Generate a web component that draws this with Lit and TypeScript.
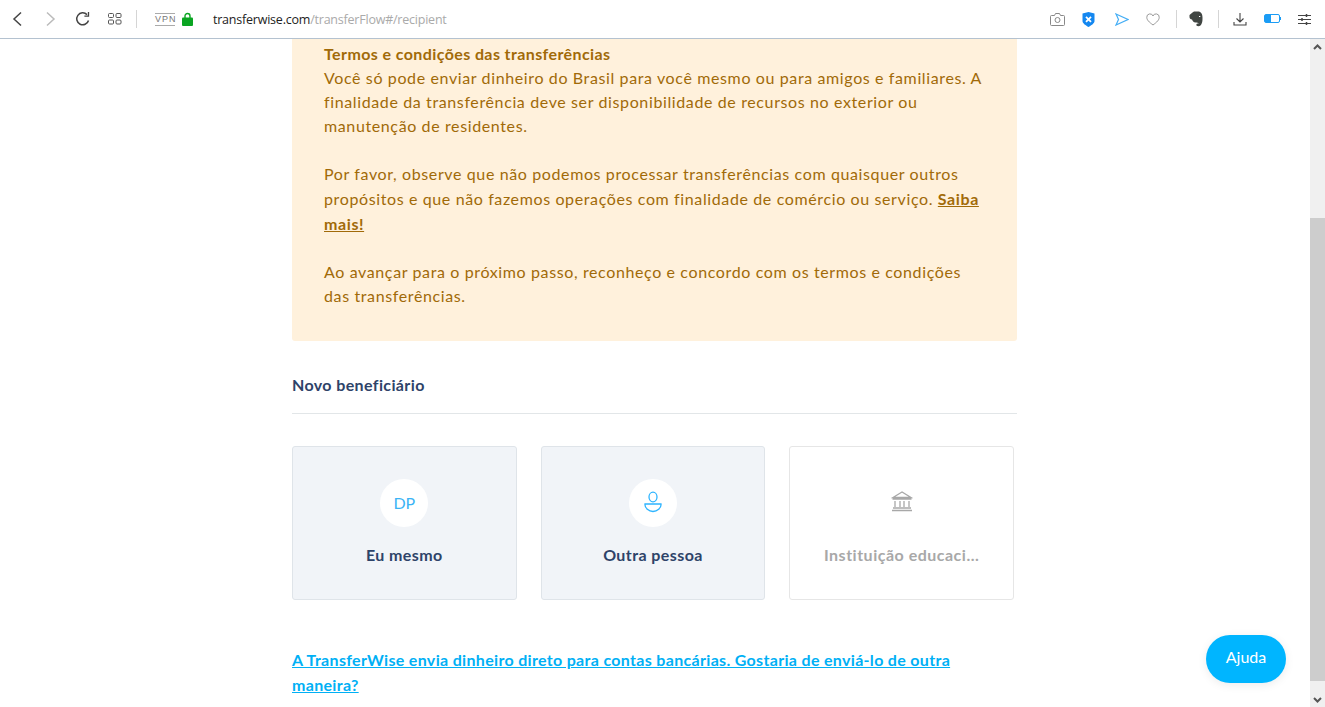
import { LitElement, html, css } from "lit";
import { customElement } from "lit/decorators.js";

@customElement("app-root")
export class AppRoot extends LitElement {
  static styles = css`
    :host { display: block; width: 1325px; height: 707px; overflow: hidden; position: relative; background: #fff; font-family: "Lato", "Liberation Sans", sans-serif; }
    svg { display: block; flex: none; }
    .bar { height: 38px; border-bottom: 1px solid #b4c2d0; display: flex; align-items: center; box-sizing: content-box; background: #fff; }
    .nav { display: flex; align-items: center; padding-left: 11px; gap: 18px; }
    .sep { width: 1px; height: 18px; background: #d5d5d5; flex: none; }
    .vpn { font: 9px "Liberation Sans", sans-serif; letter-spacing: 1px; color: #777; border-top: 1px solid #aaa; border-bottom: 1px solid #aaa; width: 20px; text-align: center; line-height: 9px; padding: 1px 0; margin-left: 18px; }
    .lock { margin-left: 7px; }
    .url { font: 12.5px "Open Sans", sans-serif; color: #222; margin-left: 20px; letter-spacing: -0.22px; }
    .url span { color: #aaa; }
    .tools { margin-left: auto; display: flex; align-items: center; padding-right: 14px; }
    .body { display: flex; height: 668px; }
    .page { flex: 1; display: flex; justify-content: center; overflow: hidden; }
    .col { width: 725px; margin-left: -1px; }
    .alert { background: #fff1dc; color: #a16a08; border-radius: 0 0 3px 3px; padding: 3px 32px 32px; height: 267px; font-size: 16px; line-height: 24px; letter-spacing: 0.62px; }
    .alert strong { font-weight: 700; letter-spacing: 0.4px; }
    .alert a { color: #a16a08; font-weight: 700; text-decoration: underline; letter-spacing: 0.6px; }
    .gap { height: 24px; }
    .line { white-space: nowrap; }
    .line.tall { height: 25px; line-height: 25px; }
    .section { margin-top: 32px; height: 40px; border-bottom: 1px solid #e2e6e8; font-size: 16px; font-weight: 700; color: #2e4369; letter-spacing: 0.38px; line-height: 24px; box-sizing: content-box; }
    .cards { display: grid; grid-template-columns: repeat(3, 224.67px); gap: 24px; margin-top: 32px; }
    .card { height: 154px; box-sizing: border-box; border: 1px solid #dfe4e9; border-radius: 3px; background: #f1f4f8; display: flex; flex-direction: column; align-items: center; padding-top: 32px; }
    .card.off { background: #fff; border-color: #e6e6e6; }
    .avatar { width: 48px; height: 48px; border-radius: 50%; background: #fff; display: flex; align-items: center; justify-content: center; color: #3bb4f5; font-size: 16px; font-weight: 400; padding-bottom: 1px; box-sizing: border-box; }
    .person { margin-bottom: 1px; }
    .bank { margin-bottom: 4px; }
    .name { margin-top: 16px; font-size: 16px; font-weight: 700; color: #2e4369; letter-spacing: 0.42px; line-height: 24px; }
    .off .name { color: #a8a8a8; letter-spacing: 0.5px; }
    .more { display: block; margin-top: 47px; font-size: 16px; font-weight: 700; color: #00b0f5; letter-spacing: 0.32px; line-height: 25px; text-decoration: underline; width: 700px; }
    .scroll { width: 15px; background: #f0f0f0; display: flex; flex-direction: column; align-items: center; }
    .arrow { height: 15px; flex: none; display: flex; align-items: center; justify-content: center; }
    .track { flex: 1; padding-top: 164px; width: 100%; box-sizing: border-box; display: flex; }
    .thumb { background: #cdcdcd; width: 100%; height: 463px; }
    .help { position: absolute; left: 1206px; top: 635px; width: 80px; height: 48px; border-radius: 24px; background: #00b5ff; color: #fff; font-size: 16px; display: flex; align-items: center; justify-content: center; box-shadow: 0 2px 10px rgba(0,0,0,.08); padding-bottom: 5px; box-sizing: border-box; }
  `;

  render() {
    return html`
      <div class="bar">
        <div class="nav">
          <svg width="12" height="16" viewBox="0 0 12 16" fill="none" stroke="#444" stroke-width="1.5"><path d="M10 1.500 3 8l7 6.500"/></svg>
          <svg width="12" height="16" viewBox="0 0 12 16" fill="none" stroke="#bbb" stroke-width="1.500" style="margin-left:3px"><path d="M3 1.500 10 8l-7 6.500"/></svg>
          <svg width="16" height="16" viewBox="0 0 16 16" fill="none" stroke="#444" stroke-width="1.500" style="margin-left:1px"><path d="M13.500 9.500A6 6 0 1 1 12 3.600"/><path d="M13.500 1v4.200H9.400" stroke-width="1.300"/></svg>
          <svg width="14" height="12" viewBox="0 0 14 12" fill="none" stroke="#555" style="margin-left:-1px"><rect x=".5" y=".5" width="5" height="4" rx="1"/><rect x="8" y=".5" width="5" height="4" rx="1"/><rect x=".5" y="7" width="5" height="4" rx="1"/><rect x="8" y="7" width="5" height="4" rx="1"/></svg>
          <div class="sep" style="margin-left:-4px"></div>
        </div>
        <div class="vpn">VPN</div>
        <svg class="lock" width="11" height="14" viewBox="0 0 11 14"><path d="M3 6V4a2.500 2.500 0 0 1 5 0v2" fill="none" stroke="#0aa522" stroke-width="1.400"/><rect x="0" y="5.500" width="11" height="8.500" rx="1" fill="#0aa522"/></svg>
        <div class="url">transferwise.com<span>/transferFlow#/recipient</span></div>
        <div class="tools">
          <svg width="15" height="13" viewBox="0 0 15 13" fill="none" stroke="#888"><path d="M1.500 2.500h3l1-2h4l1 2h3a1 1 0 0 1 1 1v8a1 1 0 0 1-1 1h-12a1 1 0 0 1-1-1v-8a1 1 0 0 1 1-1z"/><circle cx="7.500" cy="7" r="2.500"/></svg>
          <svg width="13" height="15" viewBox="0 0 13 15" style="margin-left:17px"><path d="M.5 1.500 6.500 0l6 1.500V9c0 2.500-3.500 4.500-6 6C4 13.500.5 11.500.5 9z" fill="#1487f0"/><path d="M4 4.800l5 5m0-5l-5 5" stroke="#fff" stroke-width="1.800"/></svg>
          <svg width="14" height="13" viewBox="0 0 14 13" fill="none" stroke="#45aef5" stroke-width="1.200" style="margin-left:20px"><path d="M1 1l12 5.500L1 12l2.500-5.500z"/></svg>
          <svg width="14" height="13" viewBox="0 0 14 13" fill="none" stroke="#999" style="margin-left:17px"><path d="M7 12C3 9 .8 7 .8 4.300A3.200 3.200 0 0 1 7 3a3.200 3.200 0 0 1 6.200 1.300C13.200 7 11 9 7 12z"/></svg>
          <div class="sep" style="margin-left:16px"></div>
          <svg width="14" height="16" viewBox="0 0 14 16" style="margin-left:12px"><path d="M3.500 1.500 5 .5h4c3 0 4.500 2.500 4.500 6 0 2.500 0 4-.7 5.800-.6 1.700-1.800 3-3.300 3-1.700 0-2.500-1-2-2.300.4-.9 1.800-.7 2.500-.2-.5-1-2-1.200-3.500-1.300C4.500 11.300 3.500 9.800 3 8.500 1.500 8.500.5 7.500.5 6V4z" fill="#404542"/><path d="M10 5.500h1.300" stroke="#fff"/></svg>
          <div class="sep" style="margin-left:15px"></div>
          <svg width="14" height="13" viewBox="0 0 14 13" fill="none" stroke="#444" stroke-width="1.100" style="margin-left:14px"><path d="M7 0v9M3.500 5.500 7 9l3.500-3.500M1 9v3h12V9"/></svg>
          <svg width="17" height="10" viewBox="0 0 17 10" style="margin-left:17px"><rect x=".5" y=".5" width="15" height="8" rx="1.500" fill="#fff" stroke="#1b9cf5"/><rect x="1" y="1" width="6" height="7" fill="#1b9cf5"/><rect x="16" y="3" width="1" height="3" fill="#1b9cf5"/></svg>
          <svg width="13" height="13" viewBox="0 0 13 13" stroke="#444" style="margin-left:17px"><path d="M0 2.500h13M0 6.500h13M0 10.500h13"/><path d="M8.500 1v3M4 5v3M8.500 9v3" stroke-width="1.500"/></svg>
        </div>
      </div>
      <div class="body">
        <div class="page">
          <div class="col">
            <div class="alert">
              <div class="line"><strong>Termos e condições das transferências</strong></div>
              <div class="line">Você só pode enviar dinheiro do Brasil para você mesmo ou para amigos e familiares. A</div>
              <div class="line">finalidade da transferência deve ser disponibilidade de recursos no exterior ou</div>
              <div class="line">manutenção de residentes.</div>
              <div class="gap"></div>
              <div class="line">Por favor, observe que não podemos processar transferências com quaisquer outros</div>
              <div class="line tall">propósitos e que não fazemos operações com finalidade de comércio ou serviço. <a href="#">Saiba</a></div>
              <div class="line tall"><a href="#">mais!</a></div>
              <div class="gap"></div>
              <div class="line">Ao avançar para o próximo passo, reconheço e concordo com os termos e condições</div>
              <div class="line">das transferências.</div>
            </div>
            <div class="section">Novo beneficiário</div>
            <div class="cards">
              <div class="card"><div class="avatar">DP</div><div class="name">Eu mesmo</div></div>
              <div class="card"><div class="avatar"><svg class="person" width="20" height="22" viewBox="0 0 20 22" fill="none" stroke="#2db4ff" stroke-width="1.300"><ellipse cx="10" cy="6" rx="4" ry="4.800"/><path d="M2 13h16c.5 4-4 7.500-8 7.500S1.500 17 2 13z"/></svg></div><div class="name">Outra pessoa</div></div>
              <div class="card off"><div class="avatar"><svg class="bank" width="22" height="22" viewBox="0 0 22 22" fill="none" stroke="#a8a8a8" stroke-width="1.300"><path d="M11 2 2 7.500h18zM1.500 9h19M4 11v6M9 11v6M13 11v6M18 11v6M2 18h18M1 20.500h20"/></svg></div><div class="name">Instituição educaci...</div></div>
            </div>
            <a class="more" href="#">A TransferWise envia dinheiro direto para contas bancárias. Gostaria de enviá-lo de outra maneira?</a>
          </div>
        </div>
        <div class="scroll">
          <div class="arrow"><svg width="9" height="6" viewBox="0 0 9 6" fill="none" stroke="#555" stroke-width="2"><path d="M1 5l3.500-3.500L8 5"/></svg></div>
          <div class="track"><div class="thumb"></div></div>
          <div class="arrow"><svg width="9" height="6" viewBox="0 0 9 6" fill="none" stroke="#555" stroke-width="2"><path d="M1 1l3.500 3.500L8 1"/></svg></div>
        </div>
      </div>
      <div class="help">Ajuda</div>
    `;
  }
}
